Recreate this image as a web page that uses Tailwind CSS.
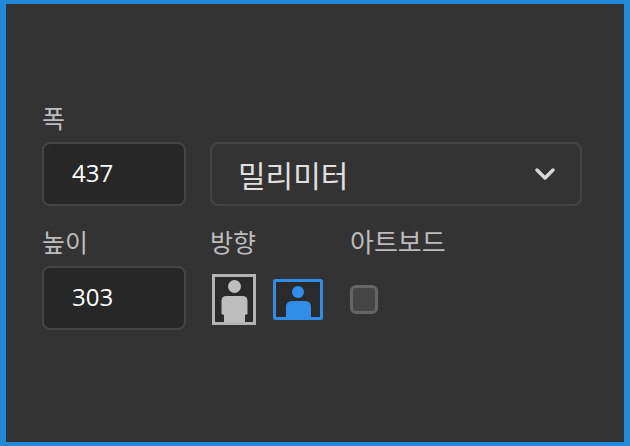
<!DOCTYPE html>
<html lang="ko">
<head>
    <meta charset="UTF-8">
    <title>문서 크기</title>
    <script src="https://cdn.jsdelivr.net/npm/@tailwindcss/browser@4"></script>
</head>
<body class="w-[630px] h-[446px] overflow-hidden bg-[#333333]">
    <div class="w-[630px] h-[446px] border-x-[6px] border-y-4 border-[#2189d8] bg-[#333333] pt-[97px] pl-9 font-['Noto_Sans_CJK_KR','Noto_Sans',sans-serif] text-[#bcbcbc]">
        <!-- width -->
        <div class="text-[25px] leading-[32px] h-8">폭</div>
        <div class="flex gap-6 mt-[9px]">
            <div class="w-[144px] h-16 bg-[#272727] border-2 border-[#454545] rounded-lg flex items-center pl-7 pb-[2px] text-[24px] text-white font-['Open_Sans',sans-serif]">437</div>
            <div class="w-[372px] h-16 border-2 border-[#454545] rounded-lg flex items-center justify-between pl-[26px] pr-6 text-[30px] text-[#e0e0e0]">
                <span>밀리미터</span>
                <svg width="22" height="14" viewBox="0 0 22 14" fill="none" stroke="#d8d8d8" stroke-width="3.5" stroke-linecap="round" stroke-linejoin="round"><path d="M3 3l8 8 8-8"/></svg>
            </div>
        </div>

        <!-- height, orientation, artboard -->
        <div class="flex mt-[19px]">
            <div class="w-[168px]">
                <div class="text-[25px] leading-[32px] h-8">높이</div>
                <div class="w-[144px] h-16 mt-[9px] bg-[#272727] border-2 border-[#454545] rounded-lg flex items-center pl-7 pb-[2px] text-[24px] text-white font-['Open_Sans',sans-serif]">303</div>
            </div>
            <div class="w-[140px]">
                <div class="text-[25px] leading-[32px] h-8">방향</div>
                <div class="flex items-center gap-[17px] h-[52px] mt-[16px] pl-[2px]">
                    <svg width="44" height="51" viewBox="0 0 44 51">
                        <rect x="1.5" y="1.5" width="41" height="48" fill="#2a2a2a" stroke="#b4b4b4" stroke-width="3"/>
                        <circle cx="22.5" cy="12.5" r="6.5" fill="#bdbdbd"/>
                        <path d="M9.5 27q0-5 5-5h16q5 0 5 5v13l-2.5 1v7H12v-7l-2.5-1z" fill="#bdbdbd"/>
                    </svg>
                    <svg width="50" height="41" viewBox="0 0 50 41">
                        <rect x="1.5" y="1.5" width="47" height="38" rx="1" fill="#2a2a2a" stroke="#2f8eea" stroke-width="3"/>
                        <circle cx="25" cy="13" r="6" fill="#2f8eea"/>
                        <path d="M13 38V28q0-6 6-6h13q6 0 6 6v10z" fill="#2f8eea"/>
                    </svg>
                </div>
            </div>
            <div>
                <div class="text-[26px] leading-[32px] h-8">아트보드</div>
                <div class="w-[28px] h-[29px] mt-[28px] bg-[#454545] border-[3px] border-[#666666] rounded-md"></div>
            </div>
        </div>
    </div>
</body>
</html>
